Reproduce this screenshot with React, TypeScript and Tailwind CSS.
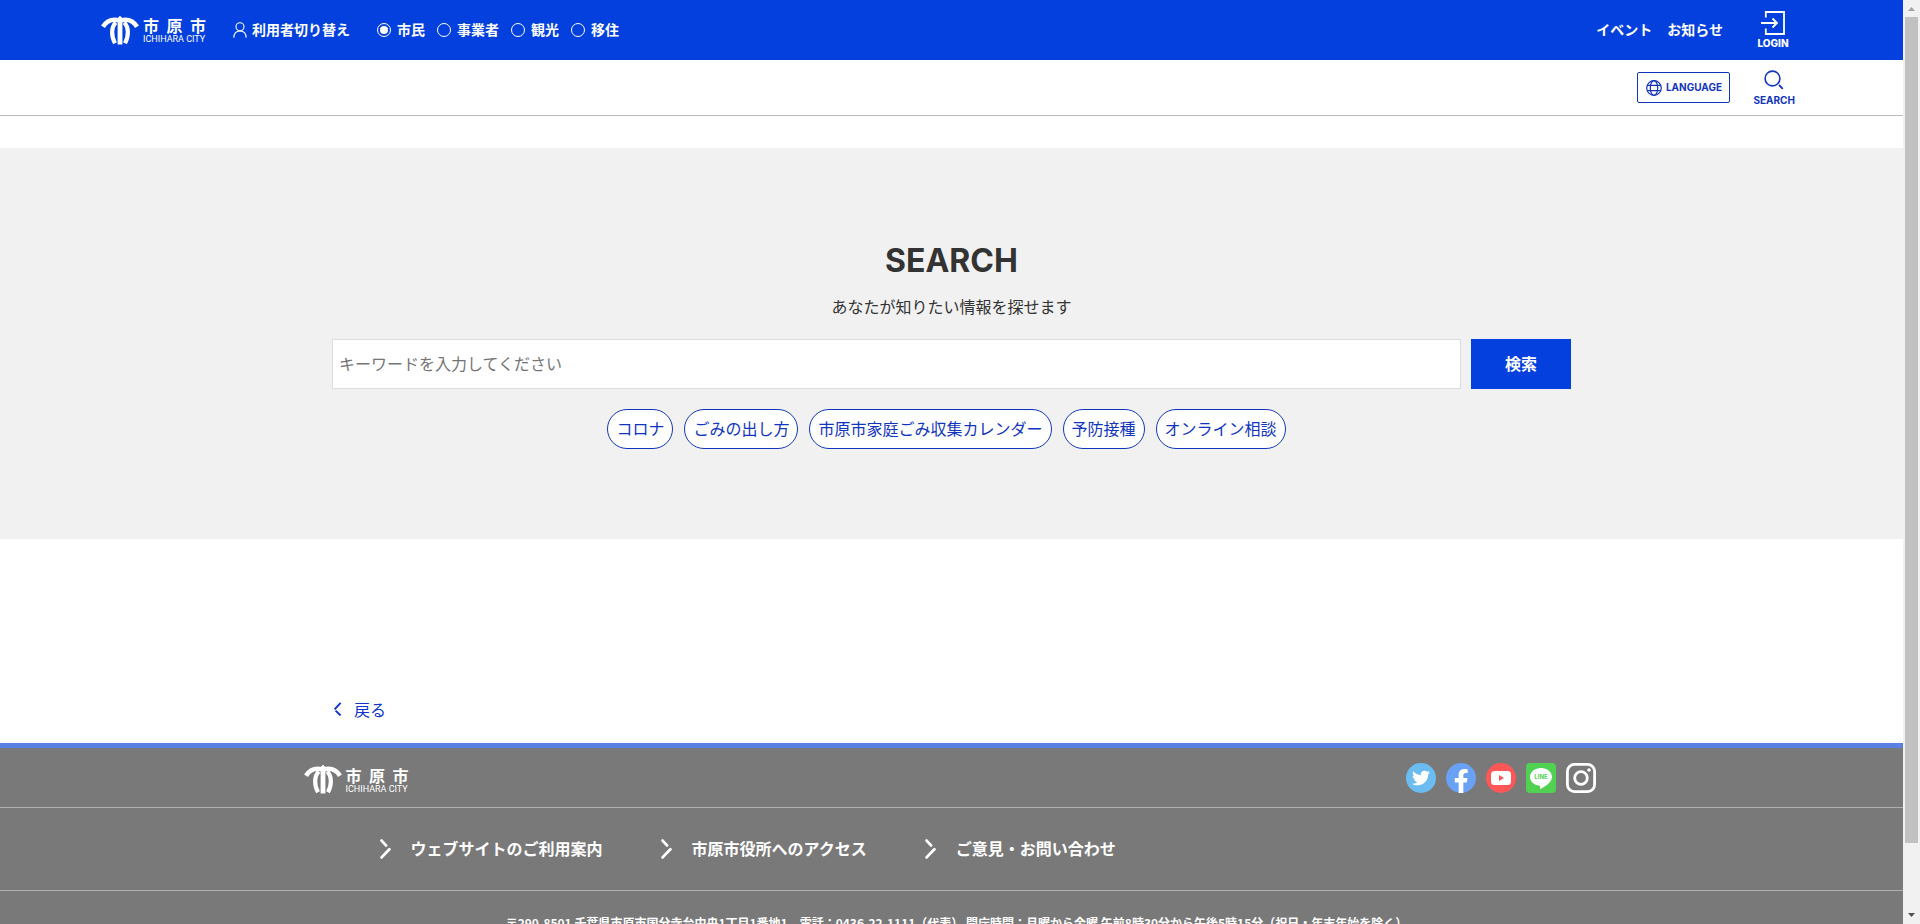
import React from 'react';
import { FaTwitter } from 'react-icons/fa';

const userTypes = ['市民', '事業者', '観光', '移住'];

const keywords = ['コロナ', 'ごみの出し方', '市原市家庭ごみ収集カレンダー', '予防接種', 'オンライン相談'];

const footerLinks = ['ウェブサイトのご利用案内', '市原市役所へのアクセス', 'ご意見・お問い合わせ'];

const Logo = () => (
  <a href="#" className="flex items-center gap-1 text-white" aria-label="市原市">
    <svg width="38" height="29" viewBox="0 0 38 29" fill="none" stroke="currentColor">
      <path d="M19 0l2.4 2.6h-4.8z" fill="currentColor" strokeWidth="0.6" />
      <path d="M18.5 4.4C11 2.6 5.500 5 2 10.800M19.500 4.400C27 2.600 32.500 5 36 10.800" strokeWidth="4.6" />
      <path d="M14.800 6.500C10.200 11 10 20 14 27.200M23.200 6.500C27.800 11 28 20 24 27.200" strokeWidth="4.2" />
      <path d="M19 3v25.500" strokeWidth="4.8" />
    </svg>
    <span className="flex w-[63px] flex-col">
      <span className="flex justify-between text-base leading-[18px] font-bold">
        <span>市</span>
        <span>原</span>
        <span>市</span>
      </span>
      <span className="font-['Roboto',sans-serif] text-[9px] leading-[10px] font-normal whitespace-nowrap">ICHIHARA CITY</span>
    </span>
  </a>
);

const UserIcon = () => (
  <svg width="14" height="16" viewBox="0 0 14 16" fill="none" stroke="currentColor" strokeWidth="1.1">
    <circle cx="7" cy="4.7" r="4" />
    <path d="M0.8 15.6C1 11.6 3.4 9 7 9s6 2.6 6.2 6.6" />
  </svg>
);

const LoginIcon = () => (
  <svg width="24" height="24" viewBox="0 0 24 24" fill="none" stroke="currentColor" strokeWidth="1.8">
    <path d="M4.8 6.5V1H23v22H4.8v-5.5M0 12h16M11.5 7.5L16 12l-4.5 4.5" />
  </svg>
);

const GlobeIcon = () => (
  <svg width="16" height="16" viewBox="0 0 16 16" fill="none" stroke="currentColor" strokeWidth="1.2">
    <circle cx="8" cy="8" r="7.3" />
    <ellipse cx="8" cy="8" rx="3.7" ry="7.3" />
    <path d="M1.2 5.3h13.6M1.2 10.7h13.6" />
  </svg>
);

const SearchIcon = () => (
  <svg width="20" height="20" viewBox="0 0 20 20" fill="none" stroke="currentColor">
    <circle cx="8.5" cy="8.5" r="7.4" strokeWidth="1.6" />
    <path d="M15 15l3.8 3.8" strokeWidth="1.8" />
  </svg>
);

const BackIcon = () => (
  <svg width="10" height="14" viewBox="0 0 10 14" fill="none" stroke="currentColor" strokeWidth="2">
    <path d="M8.6 0.8L2.6 7.4M3.6 8.6L8.6 13.4" />
  </svg>
);

const ArrowIcon = () => (
  <svg width="11" height="20" viewBox="0 0 11 20" fill="none" stroke="currentColor" strokeWidth="2.8" strokeLinecap="round">
    <path d="M1.6 1.6L6 6.4M9.4 10.2L1.6 18.4" />
  </svg>
);

const FacebookIcon = () => (
  <svg width="30" height="30" viewBox="0 0 24 24">
    <circle cx="12" cy="12" r="12" fill="#69a2f5" />
    <path
      fill="#fff"
      d="M10.125 24V15.54H7.078v-3.47h3.047V9.43c0-3.007 1.792-4.669 4.533-4.669 1.312 0 2.686.235 2.686.235v2.953H15.83c-1.491 0-1.956.925-1.956 1.874v2.25h3.328l-.532 3.47h-2.796V24z"
    />
  </svg>
);

const YoutubeIcon = () => (
  <svg width="30" height="30" viewBox="0 0 30 30">
    <circle cx="15" cy="15" r="15" fill="#ff5658" />
    <rect x="5" y="8" width="20" height="14" rx="3.5" fill="#fff" />
    <path d="M13 12v6l5-3z" fill="#ff5658" />
  </svg>
);

const LineIcon = () => (
  <svg width="30" height="30" viewBox="0 0 30 30">
    <rect width="30" height="30" rx="4" fill="#50d152" />
    <path d="M15 5C8.9 5 4 9 4 13.9c0 4.4 3.9 8 9.2 8.7 1.1.2 1 .6.8 2.8 0 .5.3.7.8.4C18 24 26 19.5 26 13.9 26 9 21.1 5 15 5z" fill="#fff" />
    <text x="15" y="16" textAnchor="middle" fill="#50d152" fontFamily="Inter, sans-serif" fontWeight="700" fontSize="6">
      LINE
    </text>
  </svg>
);

const InstagramIcon = () => (
  <svg width="30" height="30" viewBox="0 0 30 30" fill="none" stroke="#fff" strokeWidth="2.8">
    <rect x="1.4" y="1.4" width="27.2" height="27.2" rx="7" />
    <circle cx="15" cy="15" r="6.3" />
    <circle cx="23" cy="7" r="1.8" fill="#fff" stroke="none" />
  </svg>
);

const Header = () => (
  <header>
    <div className="flex h-[60px] items-center bg-[#0340de] pr-[114px] pl-[101px] text-sm font-bold text-white">
      <Logo />
      <div className="ml-[27px] flex items-center gap-[5px]">
        <UserIcon />
        <span className="pb-0.5">利用者切り替え</span>
      </div>
      <fieldset className="ml-[27px] flex items-center gap-3">
        {userTypes.map((type, i) => (
          <label key={type} className="flex items-center gap-1.5">
            <input
              type="radio"
              name="userType"
              defaultChecked={i === 0}
              className="h-3.5 w-3.5 appearance-none rounded-full border border-white bg-clip-content p-0.5 checked:bg-white"
            />
            <span className="pb-0.5">{type}</span>
          </label>
        ))}
      </fieldset>
      <nav className="ml-auto flex items-center">
        <a href="#" className="pb-0.5">イベント</a>
        <a href="#" className="ml-[15px] pb-0.5">お知らせ</a>
        <a href="#" className="ml-[34px] flex w-8 flex-col items-center pt-0.5 font-['Inter',sans-serif] text-[10px] leading-4 font-extrabold">
          <LoginIcon />
          LOGIN
        </a>
      </nav>
    </div>
    <div className="flex h-14 items-center justify-end border-b border-[#bbbbbb] pr-[108px] font-['Inter',sans-serif] text-[10px] font-bold text-[#1235be]">
      <button type="button" className="flex h-[31px] w-[93px] items-center justify-center gap-1 rounded-xs border border-current">
        <GlobeIcon />
        LANGUAGE
      </button>
      <button type="button" className="ml-[23px] flex flex-col items-center gap-1 leading-3">
        <SearchIcon />
        SEARCH
      </button>
    </div>
  </header>
);

const SearchSection = () => (
  <section className="mt-8 bg-[#f1f1f1] px-5 pt-[97px] pb-[90px]">
    <div className="mx-auto max-w-[1239px] text-center text-[#333333]">
      <h1 className="font-['Inter',sans-serif] text-[32px] leading-8 font-bold">SEARCH</h1>
      <p className="mt-[17px] leading-6">あなたが知りたい情報を探せます</p>
      <form className="mt-[21px] flex gap-2.5">
        <input
          type="text"
          aria-label="キーワード"
          placeholder="キーワードを入力してください"
          className="h-[50px] flex-1 border border-[#dddddd] bg-white px-1.5 pb-0.5 placeholder:text-[#757575]"
        />
        <button type="button" className="h-[50px] w-[100px] bg-[#0340de] pb-0.5 font-bold text-white">検索</button>
      </form>
      <ul className="mt-5 mr-2.5 flex flex-wrap justify-center gap-[11px]">
        {keywords.map(word => (
          <li key={word}>
            <a href="#" className="flex h-10 items-center rounded-[20px] border border-[#1235be] bg-white px-2 pb-0.5 text-[#1235be]">
              {word}
            </a>
          </li>
        ))}
      </ul>
    </div>
  </section>
);

const Footer = () => (
  <footer className="border-t-[5px] border-[#5b80e4] bg-[#797979] text-white">
    <div className="border-b border-[#b0b0b0]">
      <div className="mx-auto flex h-[59px] max-w-[1300px] items-center justify-between pr-1.5 pl-0.5">
        <div className="pt-1">
          <Logo />
        </div>
        <div className="flex gap-2.5">
          <a href="#" aria-label="Twitter" className="flex h-[30px] w-[30px] items-center justify-center rounded-full bg-[#6bbdf1]">
            <FaTwitter size={18} />
          </a>
          <a href="#" aria-label="Facebook"><FacebookIcon /></a>
          <a href="#" aria-label="YouTube"><YoutubeIcon /></a>
          <a href="#" aria-label="LINE"><LineIcon /></a>
          <a href="#" aria-label="Instagram"><InstagramIcon /></a>
        </div>
      </div>
    </div>
    <div className="border-b border-[#b0b0b0]">
      <nav className="mx-auto flex h-[82px] max-w-[1300px] items-center gap-[58px] pl-[78px] font-bold">
        {footerLinks.map(link => (
          <a key={link} href="#" className="flex items-center gap-5">
            <ArrowIcon />
            <span className="pb-0.5">{link}</span>
          </a>
        ))}
      </nav>
    </div>
    <p className="pt-[22px] pb-10 pl-2.5 text-center text-xs leading-5 font-bold">
      〒290-8501 千葉県市原市国分寺台中央1丁目1番地1　電話：0436-22-1111（代表） 開庁時間：月曜から金曜 午前8時30分から午後5時15分（祝日・年末年始を除く）
    </p>
  </footer>
);

const ScrollBar = () => (
  <div className="flex w-[17px] shrink-0 flex-col items-center bg-[#f1f1f1]" aria-hidden="true">
    <svg width="17" height="17" viewBox="0 0 17 17"><path d="M5 11h7L8.5 7z" fill="#a3a3a3" /></svg>
    <div className="w-[13px] grow-[826] basis-0 bg-[#c1c1c1]" />
    <div className="grow-[64] basis-0" />
    <svg width="17" height="17" viewBox="0 0 17 17"><path d="M5 6h7L8.5 10z" fill="#505050" /></svg>
  </div>
);

const App: React.FC = () => {
  return (
    <div className="flex h-screen overflow-hidden bg-white font-['Noto_Sans_CJK_JP',sans-serif] text-base">
      <div className="min-w-0 flex-1 overflow-hidden">
        <Header />
        <main>
          <SearchSection />
          <div className="mx-auto max-w-[1239px] pt-[158px] pb-[22px]">
            <a href="#" className="inline-flex items-center gap-3 leading-6 text-[#1235d0]">
              <BackIcon />
              戻る
            </a>
          </div>
        </main>
        <Footer />
      </div>
      <ScrollBar />
    </div>
  );
};

export default App;
